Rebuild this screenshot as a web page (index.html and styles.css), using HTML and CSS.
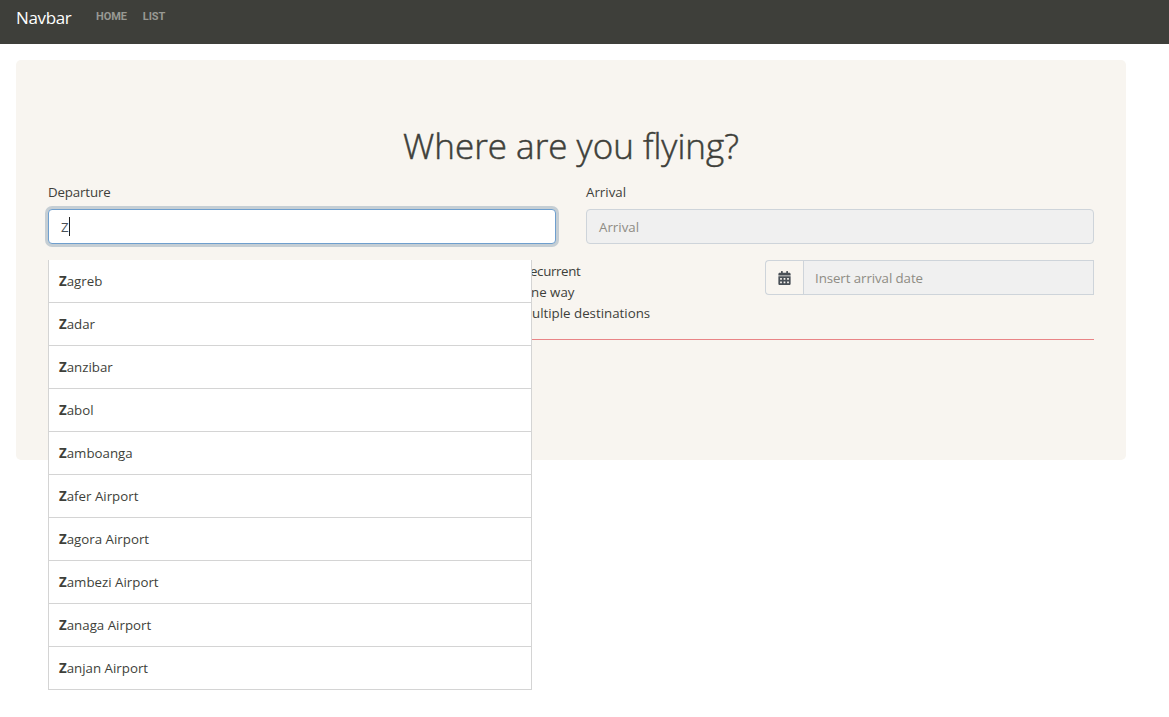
FILE: index.html
```html
<!DOCTYPE html>
<html lang="en">
<head>
<meta charset="utf-8">
<title>Flights</title>
<link rel="stylesheet" href="styles.css">
</head>
<body>
<nav class="navbar">
  <a class="brand">Navbar</a>
  <a class="nav-link">Home</a>
  <a class="nav-link">List</a>
</nav>
<main class="jumbotron">
  <h1 class="title">Where are you flying?</h1>
  <form class="form">
    <div class="row">
      <div class="field">
        <label class="label departure">Departure</label>
        <div class="control focused"><span>Z</span><i class="caret"></i></div>
        <ul class="suggestions">
          <li><b>Z</b>agreb</li>
          <li><b>Z</b>adar</li>
          <li><b>Z</b>anzibar</li>
          <li><b>Z</b>abol</li>
          <li><b>Z</b>amboanga</li>
          <li><b>Z</b>afer Airport</li>
          <li><b>Z</b>agora Airport</li>
          <li><b>Z</b>ambezi Airport</li>
          <li><b>Z</b>anaga Airport</li>
          <li><b>Z</b>anjan Airport</li>
        </ul>
      </div>
      <div class="field">
        <label class="label">Arrival</label>
        <div class="control disabled">Arrival</div>
      </div>
    </div>
    <div class="row options-row">
      <div class="options">
        <span class="recurrent">ecurrent</span>
        <span>ne way</span>
        <span class="multiple">ultiple destinations</span>
      </div>
      <div class="date-group">
        <div class="addon">
          <svg class="calendar" viewBox="0 0 448 512"><path fill="currentColor" d="M0 464c0 26.500 21.500 48 48 48h352c26.500 0 48-21.500 48-48V192H0v272zm320-196c0-6.600 5.400-12 12-12h40c6.600 0 12 5.400 12 12v40c0 6.600-5.400 12-12 12h-40c-6.600 0-12-5.400-12-12v-40zm0 128c0-6.600 5.400-12 12-12h40c6.600 0 12 5.400 12 12v40c0 6.600-5.400 12-12 12h-40c-6.600 0-12-5.400-12-12v-40zM192 268c0-6.600 5.400-12 12-12h40c6.600 0 12 5.400 12 12v40c0 6.600-5.400 12-12 12h-40c-6.600 0-12-5.400-12-12v-40zm0 128c0-6.600 5.400-12 12-12h40c6.600 0 12 5.400 12 12v40c0 6.600-5.400 12-12 12h-40c-6.600 0-12-5.400-12-12v-40zM64 268c0-6.600 5.400-12 12-12h40c6.600 0 12 5.400 12 12v40c0 6.600-5.400 12-12 12H76c-6.600 0-12-5.400-12-12v-40zm0 128c0-6.600 5.400-12 12-12h40c6.600 0 12 5.400 12 12v40c0 6.600-5.400 12-12 12H76c-6.600 0-12-5.400-12-12v-40zM400 64h-48V16c0-8.800-7.200-16-16-16h-32c-8.800 0-16 7.200-16 16v48H160V16c0-8.800-7.200-16-16-16h-32c-8.800 0-16 7.200-16 16v48H48C21.500 64 0 85.500 0 112v48h448v-48c0-26.500-21.500-48-48-48z"/></svg>
        </div>
        <div class="control disabled date">Insert arrival date</div>
      </div>
    </div>
    <hr class="divider">
  </form>
</main>
</body>
</html>
```
FILE: styles.css
```css
* { box-sizing: border-box; }
body {
  margin: 0;
  min-height: 100vh;
  background: #fff;
  color: #3e3f3a;
  font: 13.3px/21px "Open Sans", "Noto Sans", sans-serif;
}
.navbar {
  display: flex;
  align-items: flex-start;
  height: 44px;
  padding: 4px 16px 0;
  background: #3e3f3a;
}
.brand {
  width: 64px;
  margin-right: 16px;
  color: #fff;
  font: 17px/27px "Open Sans", sans-serif;
  letter-spacing: -0.35px;
}
.nav-link {
  margin-right: 16px;
  color: #989993;
  font: 700 11px/25px Roboto, sans-serif;
  letter-spacing: -0.1px;
  text-transform: uppercase;
}
.jumbotron {
  width: 1110px;
  height: 400px;
  margin: 16px 0 0 16px;
  padding: 64px 32px;
  background: #f8f5f0;
  border-radius: 5px;
}
.title {
  margin: -1px 0 9px;
  font: 300 35px/46px "Open Sans", sans-serif;
  -webkit-text-stroke: 0.5px #3e3f3a;
  text-align: center;
}
.row {
  display: grid;
  grid-template-columns: 508px 508px;
  gap: 30px;
}
.field { position: relative; min-width: 0; margin-bottom: 16px; }
.label { display: block; margin: 4px 0 6px; }
.departure { letter-spacing: -0.15px; }
.control {
  display: flex;
  align-items: center;
  height: 35px;
  padding: 2px 12px 0;
  border: 1px solid #ced4da;
  border-radius: 4px;
  background: #fff;
  color: #495057;
}
.disabled { background: #f0f0f0; color: #8e8c84; }
.focused {
  border-color: #6f9fce;
  box-shadow: 0 0 0 3px #c5ced4;
}
.caret { width: 1px; height: 19px; margin-bottom: 2px; background: #222; }
.suggestions {
  position: absolute;
  top: 100%;
  left: 0;
  z-index: 5;
  width: 484px;
  margin: 16px 0 0;
  padding: 0;
  list-style: none;
  background: #fff;
  border: 1px solid #d4d4d4;
  border-top: 0;
}
.suggestions li {
  height: 43px;
  padding: 11px 10px;
  border-bottom: 1px solid #d4d4d4;
}
.suggestions li:last-child { height: 42px; border-bottom: 0; }
.options-row { grid-template-columns: 717px 329px; gap: 0; }
.options {
  display: flex;
  flex-direction: column;
  padding: 1px 0 0 483px;
}
.recurrent { margin-left: -1px; letter-spacing: -0.35px; }
.multiple { margin-left: 1px; }
.date-group { display: flex; }
.addon {
  display: flex;
  align-items: center;
  justify-content: center;
  width: 38px;
  height: 35px;
  border: 1px solid #ced4da;
  border-right: 0;
  border-radius: 4px 0 0 4px;
  color: #495057;
}
.calendar { width: 13px; height: 14px; }
.date { flex: 1; padding: 2px 11px 0; border-radius: 0; letter-spacing: -0.08px; }
.divider {
  height: 1px;
  margin: 15px 0 0;
  border: 0;
  background: #e98486;
}
```
